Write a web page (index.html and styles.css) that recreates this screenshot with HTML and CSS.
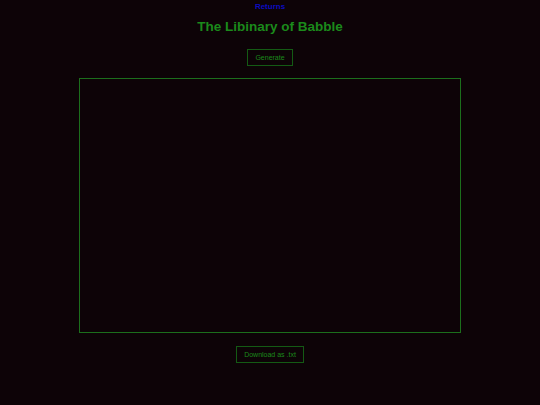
FILE: index.html
```html
<!DOCTYPE html>
<html>
<head>
<meta charset="utf-8">
<link rel="stylesheet" href="styles.css">
</head>
<body>
<div class="page">
  <a class="returns" href="#">Returns</a>
  <h1 class="title">The Libinary of Babble</h1>
  <button class="btn gen">Generate</button>
  <div class="output"></div>
  <button class="btn dl">Download as .txt</button>
</div>
</body>
</html>
```
FILE: styles.css
```css
html, body {
  margin: 0;
  padding: 0;
  background: #0d0307;
  font-family: "Liberation Sans", Arial, sans-serif;
}
.page {
  display: flex;
  flex-direction: column;
  align-items: center;
  height: 405px;
}
.returns {
  margin-top: 3px;
  font-size: 8px;
  font-weight: bold;
  color: #0c0cc0;
  text-decoration: none;
  line-height: 8px;
}
.title {
  margin: 8px 0 0 0;
  font-size: 13.5px;
  line-height: 16px;
  font-weight: bold;
  color: #1b8a1b;
}
.btn {
  background: transparent;
  border: 1px solid #145a14;
  color: #1b8a1b;
  font-family: "Liberation Sans", Arial, sans-serif;
  font-size: 7px;
  padding: 0;
  height: 17px;
  line-height: 15px;
  white-space: nowrap;
  text-align: center;
}
.gen {
  margin-top: 14px;
  width: 46px;
}
.output {
  margin-top: 12px;
  width: 380px;
  height: 253px;
  border: 1px solid #1c6e1c;
}
.dl {
  margin-top: 13px;
  width: 68px;
}
```
